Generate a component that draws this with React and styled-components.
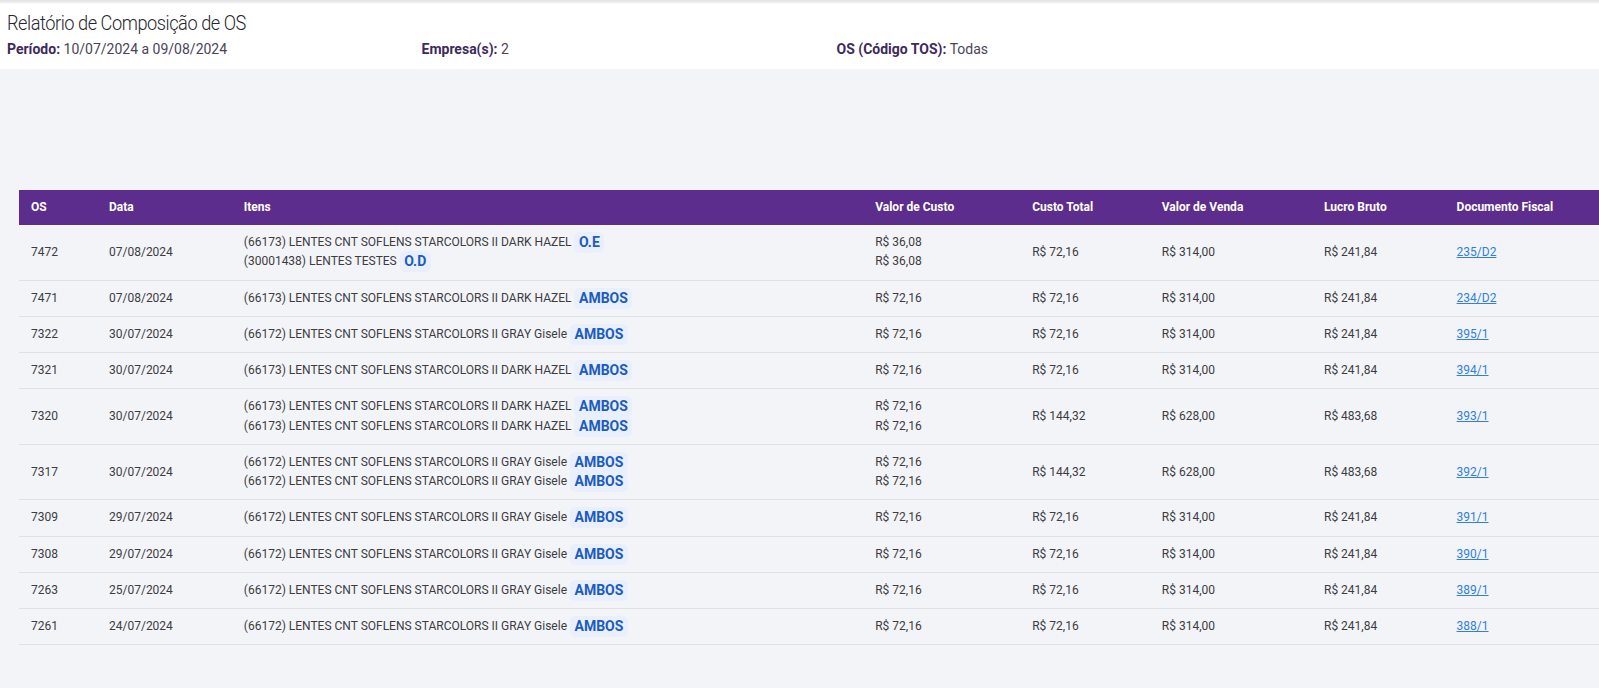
import React from 'react'
import styled, { createGlobalStyle } from 'styled-components';

const GlobalStyle = createGlobalStyle`
    html, body {
        margin: 0;
        padding: 0;
        background: #f3f4f8;
        font-family: Roboto, "Liberation Sans", sans-serif;
        overflow: hidden;
    }
`;

const Page = styled.div`
    width: 1599px;
    height: 688px;
    background: #f3f4f8;
`;

const Header = styled.header`
    height: 69px;
    box-sizing: border-box;
    padding: 12px 7px 0;
    background: linear-gradient(to bottom, #e2e2e4 0, #ececee 2px, #fff 4px);
`;

const Title = styled.h1`
    margin: 0;
    font-family: Roboto, sans-serif;
    font-size: 20px;
    font-weight: 300;
    line-height: 22px;
    letter-spacing: -0.5px;
    color: #26262e;
    transform: scaleX(0.91);
    transform-origin: left center;
`;

const Filters = styled.div`
    display: grid;
    grid-template-columns: 414.5px 415px 1fr;
    margin-top: 6px;
    font-size: 14px;
    line-height: 18px;
    color: #4a4458;
`;

const Label = styled.strong`
    font-weight: 700;
    color: #3d2a5c;
`;

const Table = styled.table`
    width: 1580px;
    margin: 121px 0 0 19px;
    border-collapse: collapse;
    table-layout: fixed;
    font-size: 12px;
    color: #3c3c42;
`;

const HeadCell = styled.th`
    box-sizing: border-box;
    height: 35px;
    padding: 0 12px 1px;
    background: #5c2d8c;
    color: #fff;
    font-weight: 700;
    text-align: left;
`;

const Row = styled.tr`
    border-bottom: 1px solid #dfe0e3;
`;

const Cell = styled.td`
    padding: 8px 12px;
    vertical-align: middle;
    line-height: 19px;
`;

const Line = styled.div`
    height: 19.25px;
    display: flex;
    align-items: center;
    white-space: nowrap;
`;

const Eye = styled.span`
    padding: 2px 4.5px;
    border-radius: 5px;
    background: #e9effc;
    color: #1a5cc0;
    font-size: 14px;
    font-weight: 700;
    line-height: 17px;
`;

const DocLink = styled.a`
    color: #2f7fe0;
    text-decoration: underline;
`;

const DARK = '(66173) LENTES CNT SOFLENS STARCOLORS II DARK HAZEL';
const GRAY = '(66172) LENTES CNT SOFLENS STARCOLORS II GRAY Gisele';

const rows = [
    { os: '7472', date: '07/08/2024', items: [[DARK, 'O.E'], ['(30001438) LENTES TESTES', 'O.D']], costs: ['R$ 36,08', 'R$ 36,08'], total: 'R$ 72,16', sale: 'R$ 314,00', profit: 'R$ 241,84', doc: '235/D2' },
    { os: '7471', date: '07/08/2024', items: [[DARK, 'AMBOS']], costs: ['R$ 72,16'], total: 'R$ 72,16', sale: 'R$ 314,00', profit: 'R$ 241,84', doc: '234/D2' },
    { os: '7322', date: '30/07/2024', items: [[GRAY, 'AMBOS']], costs: ['R$ 72,16'], total: 'R$ 72,16', sale: 'R$ 314,00', profit: 'R$ 241,84', doc: '395/1' },
    { os: '7321', date: '30/07/2024', items: [[DARK, 'AMBOS']], costs: ['R$ 72,16'], total: 'R$ 72,16', sale: 'R$ 314,00', profit: 'R$ 241,84', doc: '394/1' },
    { os: '7320', date: '30/07/2024', items: [[DARK, 'AMBOS'], [DARK, 'AMBOS']], costs: ['R$ 72,16', 'R$ 72,16'], total: 'R$ 144,32', sale: 'R$ 628,00', profit: 'R$ 483,68', doc: '393/1' },
    { os: '7317', date: '30/07/2024', items: [[GRAY, 'AMBOS'], [GRAY, 'AMBOS']], costs: ['R$ 72,16', 'R$ 72,16'], total: 'R$ 144,32', sale: 'R$ 628,00', profit: 'R$ 483,68', doc: '392/1' },
    { os: '7309', date: '29/07/2024', items: [[GRAY, 'AMBOS']], costs: ['R$ 72,16'], total: 'R$ 72,16', sale: 'R$ 314,00', profit: 'R$ 241,84', doc: '391/1' },
    { os: '7308', date: '29/07/2024', items: [[GRAY, 'AMBOS']], costs: ['R$ 72,16'], total: 'R$ 72,16', sale: 'R$ 314,00', profit: 'R$ 241,84', doc: '390/1' },
    { os: '7263', date: '25/07/2024', items: [[GRAY, 'AMBOS']], costs: ['R$ 72,16'], total: 'R$ 72,16', sale: 'R$ 314,00', profit: 'R$ 241,84', doc: '389/1' },
    { os: '7261', date: '24/07/2024', items: [[GRAY, 'AMBOS']], costs: ['R$ 72,16'], total: 'R$ 72,16', sale: 'R$ 314,00', profit: 'R$ 241,84', doc: '388/1' },
];

const columns = [
    ['OS', 78], ['Data', 134.8], ['Itens', 631.4], ['Valor de Custo', 157],
    ['Custo Total', 129.6], ['Valor de Venda', 162.2], ['Lucro Bruto', 132.6], ['Documento Fiscal', 154.4],
];

export default function App() {
    return (
        <Page>
            <GlobalStyle />
            <Header>
                <Title>Relatório de Composição de OS</Title>
                <Filters>
                    <div><Label>Período:</Label> 10/07/2024 a 09/08/2024</div>
                    <div><Label>Empresa(s):</Label> 2</div>
                    <div><Label>OS (Código TOS):</Label> Todas</div>
                </Filters>
            </Header>
            <Table>
                <colgroup>
                    {columns.map(([name, width]) => <col key={name} style={{ width }} />)}
                </colgroup>
                <thead>
                    <tr>
                        {columns.map(([name]) => <HeadCell key={name}>{name}</HeadCell>)}
                    </tr>
                </thead>
                <tbody>
                    {rows.map(row => (
                        <Row key={row.os}>
                            <Cell>{row.os}</Cell>
                            <Cell>{row.date}</Cell>
                            <Cell>
                                {row.items.map(([name, eye], i) => (
                                    <Line key={i}>{name}&nbsp;<Eye>{eye}</Eye></Line>
                                ))}
                            </Cell>
                            <Cell>
                                {row.costs.map((cost, i) => <Line key={i}>{cost}</Line>)}
                            </Cell>
                            <Cell>{row.total}</Cell>
                            <Cell>{row.sale}</Cell>
                            <Cell>{row.profit}</Cell>
                            <Cell><DocLink href="#">{row.doc}</DocLink></Cell>
                        </Row>
                    ))}
                </tbody>
            </Table>
        </Page>
    )
}
